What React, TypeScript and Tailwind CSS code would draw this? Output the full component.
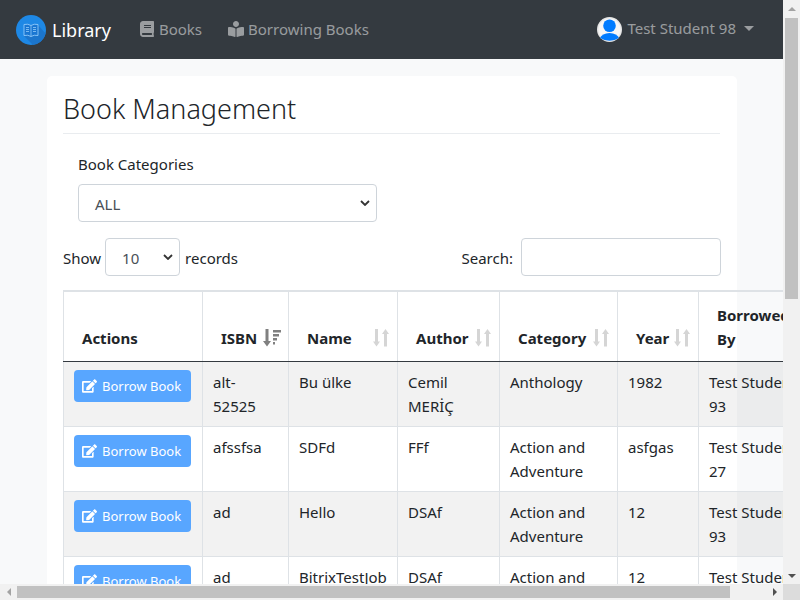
import { FaBook, FaBookReader, FaEdit } from 'react-icons/fa'

const rows = [
  { isbn: 'alt-52525', name: 'Bu ülke', author: 'Cemil MERİÇ', category: 'Anthology', year: '1982', by: 'Test Student 93' },
  { isbn: 'afssfsa', name: 'SDFd', author: 'FFf', category: 'Action and Adventure', year: 'asfgas', by: 'Test Student 27' },
  { isbn: 'ad', name: 'Hello', author: 'DSAf', category: 'Action and Adventure', year: '12', by: 'Test Student 93' },
  { isbn: 'ad', name: 'BitrixTestJob', author: 'DSAf', category: 'Action and Adventure', year: '12', by: 'Test Student 93' },
]

function LogoIcon() {
  return (
    <svg viewBox="0 0 30 30" className="w-[30px] h-[30px] shrink-0">
      <circle cx="15" cy="15" r="15" fill="#1e88e5" />
      <path d="M8 21 L17 29.9 A15 15 0 0 0 29.6 18.5 L22 10 Z" fill="#1b75cc" />
      <path d="M8 9.5 Q12 8.5 15 10.5 Q18 8.5 22 9.5 V20.5 Q18 19.5 15 21.5 Q12 19.5 8 20.5 Z" fill="#1976d2" stroke="#90caf9" strokeWidth="0.9" />
      <path d="M15 10.5V21.5" stroke="#90caf9" strokeWidth="0.8" />
      <path d="M10 12.5h3M10 14.5h3M10 16.5h3M17 12.5h3M17 14.5h3M17 16.5h3" stroke="#90caf9" strokeWidth="0.8" />
    </svg>
  )
}

function AvatarIcon() {
  return (
    <svg viewBox="0 0 25 25" className="w-[25px] h-[25px] shrink-0">
      <circle cx="12.5" cy="12.5" r="12.5" fill="#e6e6e6" />
      <circle cx="12.5" cy="12.5" r="11" fill="#f6f6f6" />
      <path d="M3 21 Q5 16.5 12.5 16 Q20 16.5 22 21 Q17.5 23.8 12.5 23.8 Q7.5 23.8 3 21 Z" fill="#007bff" />
      <circle cx="12.5" cy="8.8" r="6.3" fill="#007bff" />
    </svg>
  )
}

function SortIcon({ active }: { active?: boolean }) {
  if (active) {
    return (
      <svg viewBox="0 0 18 18" className="w-[18px] h-[18px] -mr-px shrink-0" fill="#808080">
        <path d="M2.5 0h3v12h2.5l-4 5.5-4-5.5h2.5z" />
        <path d="M10 1h8v2.5h-8zM10 5h6v2.5h-6zM10 9h4v2.5h-4zM10 13h2v2.5h-2z" />
      </svg>
    )
  }
  return (
    <svg viewBox="0 0 16 18" className="w-[16px] h-[18px] shrink-0" fill="#d5d5d5">
      <path d="M2 0h3v12.5h2l-3.5 5-3.5-5h2z" />
      <path d="M11 17.5h3V5h2l-3.5-5-3.5 5h2z" />
    </svg>
  )
}

function Th({ label, sort, active }: { label: string; sort?: boolean; active?: boolean }) {
  return (
    <th className="border-r border-[#dee2e6] border-b border-b-[#343a40] align-bottom px-0 pb-[11px] font-bold text-left">
      <div className="flex items-center justify-between pr-[8px] pl-[18px]">
        <span>{label}</span>
        {sort && <SortIcon active={active} />}
      </div>
    </th>
  )
}

const tdClass = 'border border-[#dee2e6] border-t-0 px-[10px] py-2 align-top'

export default function App() {
  return (
    <div className="w-[800px] h-[600px] overflow-hidden flex flex-col bg-[#f1f1f1] font-['Noto_Sans',sans-serif] text-[15px] leading-6 text-[#212529]">
      <div className="flex flex-1 min-h-0">
        <div className="w-[783px] overflow-hidden bg-[#f8f9fa]">
          <nav className="h-[59px] bg-[#343a40] flex items-center pl-4 pr-[29px]">
            <LogoIcon />
            <span className="ml-[6px] text-[18px] text-white">Library</span>
            <a className="ml-[29px] pb-[2px] flex items-center text-[rgba(255,255,255,0.5)]">
              <FaBook className="w-[14px] h-[16px] mr-[5px]" />Books
            </a>
            <a className="ml-[26px] pb-[2px] flex items-center text-[rgba(255,255,255,0.5)]">
              <FaBookReader className="w-[16px] h-[16px] mr-[4px]" />Borrowing Books
            </a>
            <div className="ml-auto flex items-center text-[rgba(255,255,255,0.5)]">
              <AvatarIcon />
              <span className="ml-[5px] pb-[3px]">Test Student 98</span>
              <span className="ml-[8px] mb-[3px] border-x-[5px] border-x-transparent border-t-[5px] border-t-[rgba(255,255,255,0.5)]" />
            </div>
          </nav>
          <main className="pt-[17px] pl-[47px]">
            <div className="w-[690px] bg-white rounded-[5px] pt-[13px] px-4 pb-4">
              <h1 className="text-[27px] leading-[40px] font-light pb-[4px] border-b border-[#e9ecef] w-[657px]">Book Management</h1>
              <div className="pl-[15px] pt-[18px]">
                <label className="block mb-2">Book Categories</label>
                <div className="w-[299px] h-[38px] border border-[#ced4da] rounded flex items-center justify-between pl-4 pr-[6px] text-[#495057]">
                  <span className="pt-[2px]">ALL</span>
                  <svg viewBox="0 0 10 6" className="w-[10px] h-[6px]"><path d="M1 1l4 4 4-4" fill="none" stroke="#333" strokeWidth="1.8" /></svg>
                </div>
              </div>
              <div className="flex items-center mt-4 w-[658px]">
                <span className="pt-[2px]">Show</span>
                <div className="ml-[4px] w-[75px] h-[38px] border border-[#ced4da] rounded flex items-center justify-between pl-4 pr-[6px] text-[#495057]">
                  <span className="pt-[2px]">10</span>
                  <svg viewBox="0 0 10 6" className="w-[10px] h-[6px]"><path d="M1 1l4 4 4-4" fill="none" stroke="#333" strokeWidth="1.8" /></svg>
                </div>
                <span className="ml-[5px] pt-[2px]">records</span>
                <span className="ml-auto pt-[2px]">Search:</span>
                <div className="ml-2 w-[200px] h-[38px] border border-[#ced4da] rounded bg-white" />
              </div>
              <table className="mt-[14px] w-[747px] table-fixed border-collapse border-t-2 border-l border-[#dee2e6]">
                <colgroup>
                  <col className="w-[139px]" />
                  <col className="w-[86px]" />
                  <col className="w-[109px]" />
                  <col className="w-[102px]" />
                  <col className="w-[118px]" />
                  <col className="w-[81px]" />
                  <col className="w-[112px]" />
                </colgroup>
                <thead>
                  <tr>
                    <Th label="Actions" />
                    <Th label="ISBN" sort active />
                    <Th label="Name" sort />
                    <Th label="Author" sort />
                    <Th label="Category" sort />
                    <Th label="Year" sort />
                    <th className="border-b border-b-[#343a40] align-bottom pl-[18px] pr-[18px] pt-[11px] pb-[10px] font-bold text-left">Borrowed By</th>
                  </tr>
                </thead>
                <tbody>
                  {rows.map((r, i) => (
                    <tr key={i} className={i % 2 === 0 ? 'bg-[rgba(0,0,0,0.05)]' : ''}>
                      <td className={tdClass}>
                        <button className="w-[117px] h-[32px] bg-[#58a6ff] rounded text-white text-[13px] flex items-center justify-start pl-[8px] gap-[5px]">
                          <FaEdit className="w-[15px] h-[14px]" />Borrow Book
                        </button>
                      </td>
                      <td className={tdClass}>{r.isbn}</td>
                      <td className={tdClass}>{r.name}</td>
                      <td className={tdClass}>{r.author}</td>
                      <td className={tdClass}>{r.category}</td>
                      <td className={tdClass}>{r.year}</td>
                      <td className={tdClass}>{r.by}</td>
                    </tr>
                  ))}
                </tbody>
              </table>
            </div>
          </main>
        </div>
        <div className="w-[17px] flex flex-col items-center bg-[#f1f1f1]">
          <div className="h-[17px] flex items-center justify-center">
            <div className="border-x-[4px] border-x-transparent border-b-[4px] border-b-[#a3a3a3]" />
          </div>
          <div className="w-[13px] h-[281px] bg-[#c1c1c1] mt-px" />
          <div className="mt-auto h-[17px] flex items-center justify-center">
            <div className="border-x-[4px] border-x-transparent border-t-[4px] border-t-[#505050]" />
          </div>
        </div>
      </div>
      <div className="h-[16px] flex items-center bg-[#f1f1f1] shrink-0">
        <div className="w-[17px] flex justify-center">
          <div className="border-y-[4px] border-y-transparent border-r-[4px] border-r-[#a3a3a3]" />
        </div>
        <div className="w-[713px] h-[12px] bg-[#c1c1c1]" />
        <div className="ml-[36px] w-[17px] flex justify-center">
          <div className="border-y-[4px] border-y-transparent border-l-[4px] border-l-[#505050]" />
        </div>
        <div className="w-[17px] h-full bg-[#dcdcdc]" />
      </div>
    </div>
  )
}
